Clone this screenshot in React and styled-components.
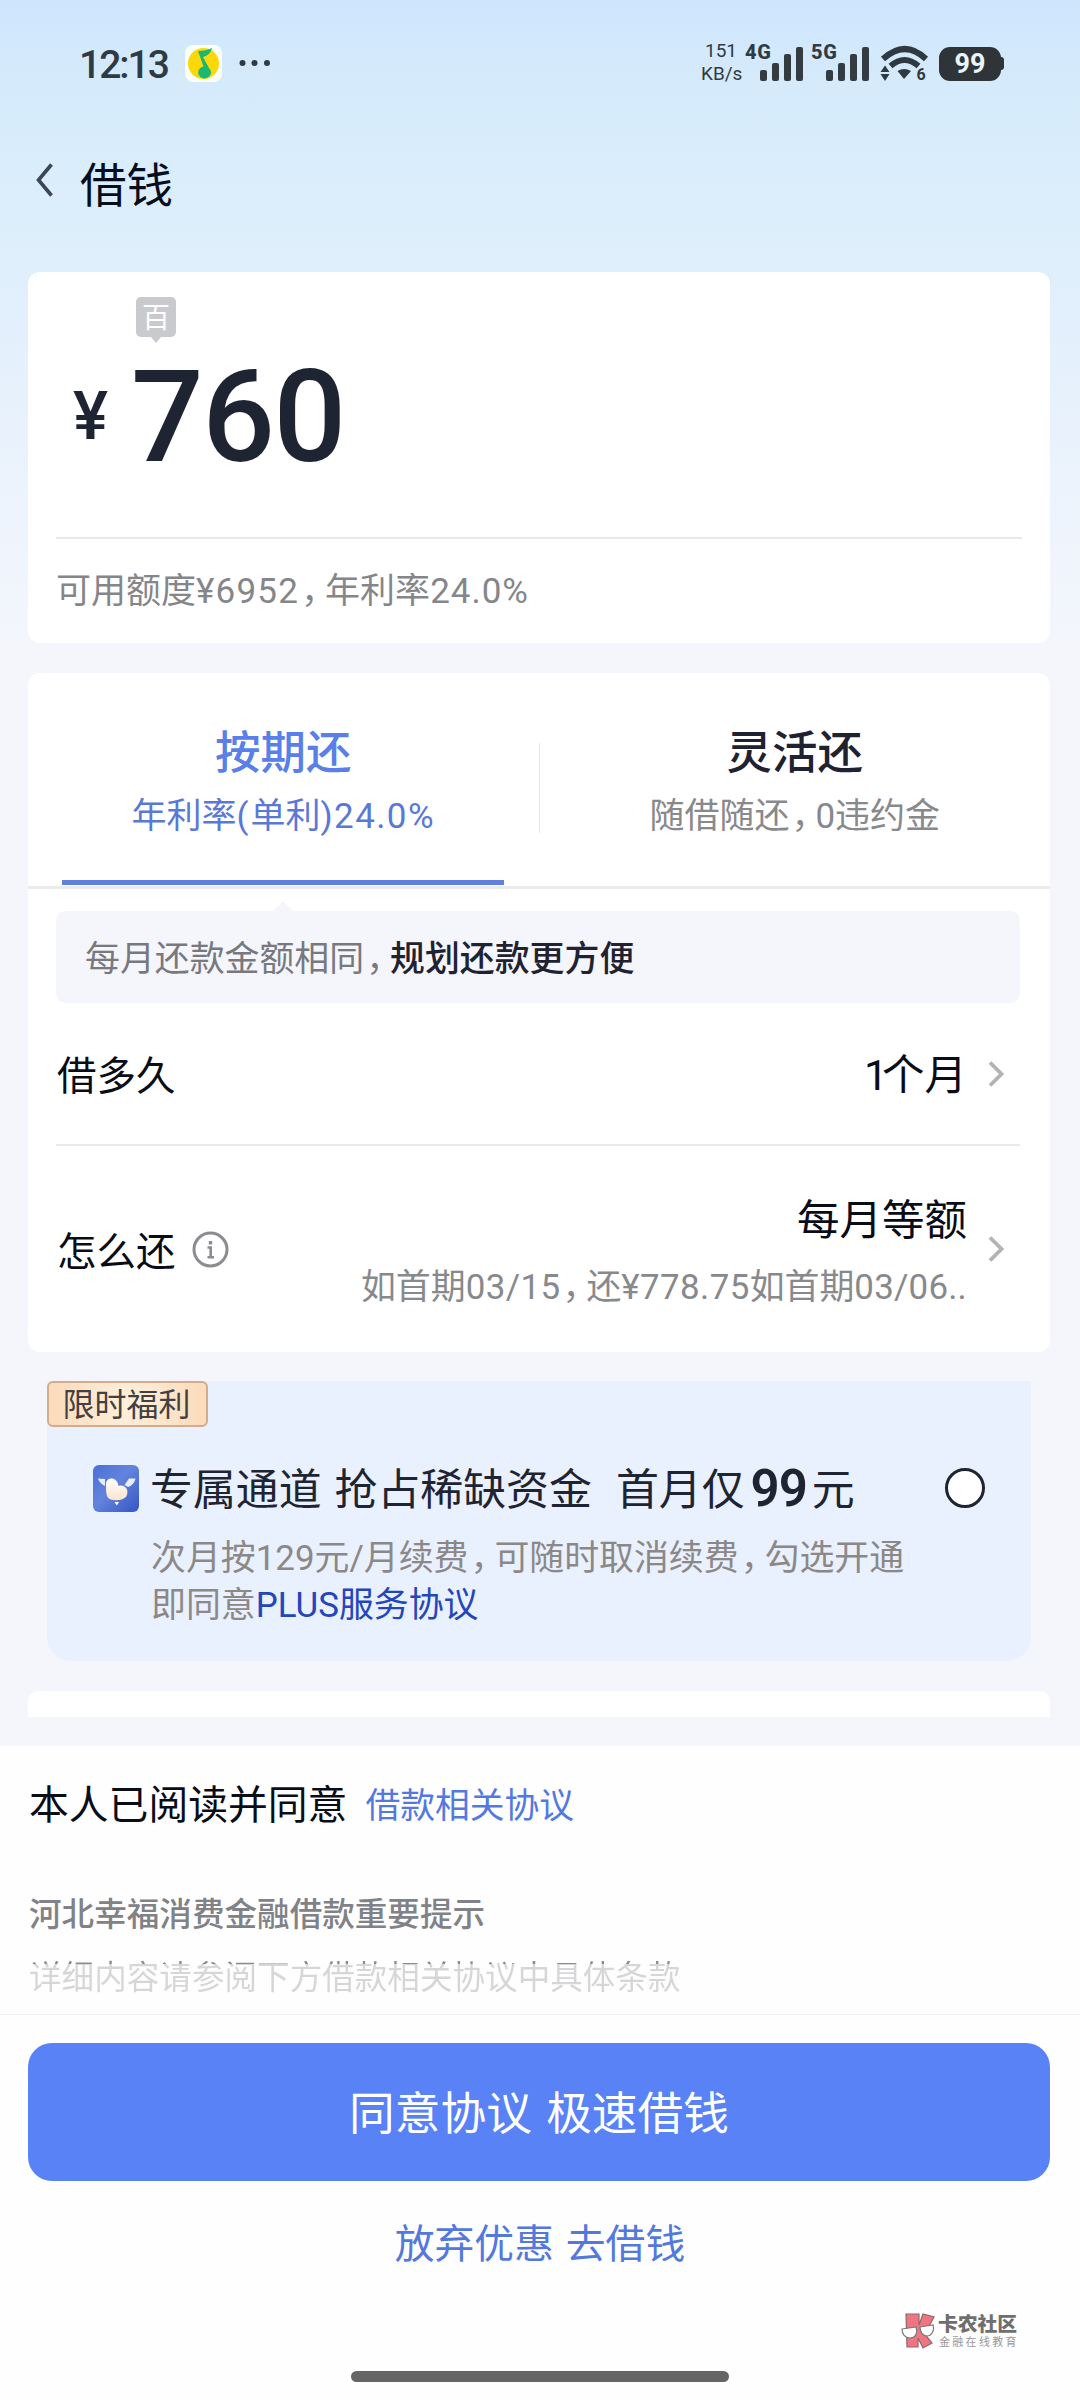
import React from "react";
import styled, { createGlobalStyle } from "styled-components";

const GlobalStyle = createGlobalStyle`
  * { box-sizing: border-box; }
  body {
    margin: 0;
    font-family: Roboto, "Noto Sans CJK SC", sans-serif;
    -webkit-font-smoothing: antialiased;
  }
`;

const Screen = styled.div`
  position: relative;
  display: flex;
  flex-direction: column;
  width: 1080px;
  height: 2400px;
  overflow: hidden;
  background: linear-gradient(180deg, #cfe5fd 0, #d5ebfb 85px, #dceefb 210px, #e1effc 290px, #f4f6fc 640px);
`;

/* Status bar */
const StatusBar = styled.header`
  display: flex;
  align-items: center;
  height: 126px;
  padding: 0 76px 0 79px;
  color: #2f3a45;
`;
const Clock = styled.span`
  width: 106px;
  font-size: 39px;
  line-height: 46px;
  font-weight: 500;
  letter-spacing: -2px;
  padding-top: 3px;
`;
const MusicIcon = styled.svg`
  width: 37px;
  height: 37px;
  flex: none;
`;
const MoreDots = styled.svg`
  width: 32px;
  height: 8px;
  margin-left: 17px;
`;
const StatusRight = styled.div`
  display: flex;
  align-items: flex-end;
  height: 40px;
  margin: 0 0 1px auto;
  padding-bottom: 2px;
`;
const NetSpeed = styled.div`
  width: 40px;
  margin-right: 4px;
  font-size: 19px;
  line-height: 23px;
  text-align: center;
  margin-bottom: -4px;
`;
const Signal = styled.div`
  display: flex;
  align-items: flex-end;
  width: ${(p) => p.$width}px;
  height: 38px;
`;
const NetLabel = styled.span`
  align-self: flex-start;
  width: 15px;
  font-size: 20px;
  line-height: 19px;
  font-weight: 800;
  letter-spacing: 0.8px;
  white-space: nowrap;
`;
const BarsIcon = styled.svg`
  width: 43px;
  height: 34px;
  flex: none;
`;
const WifiIcon = styled.svg`
  width: 48px;
  height: 36px;
  overflow: visible;
`;
const Battery = styled.div`
  display: flex;
  align-items: center;
  margin-left: 12px;
`;
const BatteryBody = styled.div`
  width: 62px;
  height: 34px;
  border-radius: 11px;
  background: #2e3438;
  color: #eaf5fd;
  font-size: 27px;
  line-height: 35px;
  font-weight: 700;
  text-align: center;
`;
const BatteryCap = styled.div`
  width: 3px;
  height: 13px;
  border-radius: 0 3px 3px 0;
  background: #2e3438;
`;

/* Title bar */
const TitleBar = styled.div`
  display: flex;
  align-items: center;
  height: 146px;
  padding: 0 0 30px 36px;
`;
const BackIcon = styled.svg`
  width: 18px;
  height: 34px;
  margin: -9px 26px 0 0;
`;
const PageTitle = styled.h1`
  margin: 0;
  padding-top: 3px;
  color: #080c1c;
  font-size: 46.5px;
  line-height: 60px;
  font-weight: 400;
`;

/* Cards */
const Card = styled.section`
  position: relative;
  flex: none;
  height: ${(p) => p.$height}px;
  margin: ${(p) => p.$top || 0}px 30px 0 28px;
  border-radius: ${(p) => p.$radius || "12px"};
  background: #fff;
`;

const UnitBadge = styled.div`
  position: absolute;
  top: 25px;
  left: 108px;
  width: 40px;
  height: 40px;
  border-radius: 5px;
  background: #c9cacd;
  color: #fff;
  font-size: 28px;
  line-height: 44px;
  text-align: center;
  &::after {
    content: "";
    position: absolute;
    left: 15px;
    bottom: -6px;
    border: 5px solid transparent;
    border-width: 6px 5px 0;
    border-top-color: #c9cacd;
  }
`;
const AmountRow = styled.div`
  display: flex;
  align-items: center;
  height: 267px;
  padding: 24px 0 0 17px;
  margin: 0 28px;
  border-bottom: 2px solid #e9e9eb;
  color: #1f2433;
  font-weight: 500;
`;
const Currency = styled.span`
  width: 58px;
  font-size: 66px;
  line-height: 68px;
`;
const Amount = styled.span`
  font-size: 128px;
  line-height: 128px;
  letter-spacing: -1.5px;
`;
const Quota = styled.p`
  margin: 0 28px;
  color: #858689;
  font-size: 35px;
  line-height: 106px;
  white-space: nowrap;
`;
const CommaMark = styled.span`
  margin-left: 2px;
  letter-spacing: -11px;
`;
const Num = styled.span`
  letter-spacing: ${(p) => p.$spacing}px;
`;

/* Repayment tabs */
const Tabs = styled.div`
  display: flex;
  height: 216px;
  border-bottom: 3px solid #ebebed;
`;
const Tab = styled.div`
  display: flex;
  flex: 1;
  flex-direction: column;
  align-items: center;
  padding-top: 51px;
  color: ${(p) => (p.$active ? "#5a7fe8" : "#1f2230")};
`;
const TabTitle = styled.div`
  font-size: 45.5px;
  line-height: 60px;
  font-weight: 500;
`;
const TabHint = styled.div`
  margin-top: 9px;
  color: ${(p) => (p.$active ? "#5a78d6" : "#88898c")};
  font-size: 35px;
  line-height: 48px;
  white-space: nowrap;
`;
const TabLine = styled.div`
  width: 442px;
  height: 5px;
  margin-top: 39px;
  background: #5f80dc;
`;
const TabDivider = styled.div`
  width: 1px;
  height: 90px;
  margin-top: 70px;
  background: #e6e6e8;
`;
const Notice = styled.div`
  position: relative;
  height: 92px;
  margin: 22px 30px 0 28px;
  padding-left: 29px;
  border-radius: 9px;
  background: #f5f6fc;
  color: #77797f;
  font-size: 34.9px;
  line-height: 97px;
  white-space: nowrap;
  &::before {
    content: "";
    position: absolute;
    top: -10px;
    left: 217px;
    border: 10px solid transparent;
    border-top-width: 0;
    border-bottom-color: #f5f6fc;
  }
  b {
    color: #1f2230;
    font-weight: 500;
  }
`;
const Row = styled.div`
  display: flex;
  align-items: center;
  height: ${(p) => p.$height}px;
  margin: 0 30px 0 28px;
  padding-right: 15px;
  border-bottom: ${(p) => (p.$divided ? "2px solid #e9e9eb" : "0")};
`;
const RowLabel = styled.span`
  color: #0a0c18;
  font-size: 39.5px;
  line-height: 60px;
  padding: 7px 0 0 1px;
`;
const InfoIcon = styled.svg`
  width: 37px;
  height: 37px;
  margin-left: 16px;
`;
const RowValue = styled.div`
  margin-left: auto;
  color: #0a0c18;
  font-size: 42.5px;
  line-height: 60px;
  text-align: right;
  padding-top: 5px;
`;
const RowNote = styled.div`
  margin-top: 13px;
  color: #88898c;
  font-size: 34.9px;
  line-height: 48px;
  white-space: nowrap;
`;
const Chevron = styled.svg`
  width: 17px;
  height: 28px;
  margin-left: 21px;
`;

/* Promotion */
const Promo = styled.section`
  flex: none;
  height: 280px;
  margin: 29px 49px 0 47px;
  border-radius: 0 0 24px 24px;
  background: #e9f0fe;
`;
const PromoTag = styled.div`
  width: 161px;
  height: 46px;
  border: 2px solid #d2ac8c;
  border-radius: 6px;
  background: radial-gradient(circle at 50% 50%, #fff1de 0, #fbdcbd 90%);
  color: #44403f;
  font-size: 32px;
  line-height: 45px;
  padding-right: 2px;
  text-align: center;
  white-space: nowrap;
`;
const PromoHead = styled.div`
  display: flex;
  align-items: center;
  height: 60px;
  margin-top: 31px;
  padding: 0 46px 0 46px;
`;
const PromoIcon = styled.svg`
  width: 46px;
  height: 47px;
  flex: none;
`;
const PromoTitle = styled.div`
  display: flex;
  align-items: center;
  margin-left: 11px;
  color: #1f2433;
  font-size: 42.9px;
  line-height: 60px;
  white-space: nowrap;
`;
const TitlePart = styled.span`
  margin-left: ${(p) => p.$gap || 0}px;
  padding-top: 4px;
`;
const PromoPrice = styled.strong`
  margin-left: 6px;
  padding-top: 2px;
  font-size: 51px;
  font-weight: 600;
  letter-spacing: -1px;
`;
const Radio = styled.span`
  width: 40px;
  height: 40px;
  margin: -1px 0 0 auto;
  border: 3px solid #1f2433;
  border-radius: 50%;
  background: #fff;
`;
const PromoText = styled.p`
  margin: 17px 0 0 104px;
  color: #8c8888;
  font-size: 34.9px;
  line-height: 47px;
  white-space: nowrap;
`;
const PlusLink = styled.a`
  color: #2446bb;
`;

/* Bottom panel */
const BottomPanel = styled.footer`
  position: relative;
  display: flex;
  flex: none;
  flex-direction: column;
  height: 654px;
  margin-top: 29px;
  background: #fefefe;
`;
const Consent = styled.div`
  display: flex;
  align-items: center;
  height: 118px;
  padding: 2px 0 0 29px;
  color: #0a0c18;
  font-size: 39.8px;
  line-height: 60px;
`;
const ConsentLink = styled.a`
  margin-left: 18px;
  color: #5379e0;
  font-size: 34.8px;
`;
const TipTitle = styled.div`
  margin: 28px 0 0 29px;
  color: #808287;
  font-size: 32.6px;
  line-height: 46px;
  font-weight: 500;
`;
const TipText = styled.div`
  align-self: flex-start;
  margin: 17px 0 13px 29px;
  background: linear-gradient(180deg, #8b8c8f 9px, #d6d6d8 9px);
  background-clip: text;
  color: transparent;
  font-size: 32.6px;
  line-height: 46px;
`;
const Submit = styled.button`
  height: 138px;
  margin: 28px 30px 0 28px;
  padding: 5px 0 0;
  border: 0;
  border-radius: 24px;
  background: #5882f6;
  color: #fff;
  font: 400 45.7px/60px Roboto, "Noto Sans CJK SC", sans-serif;
  word-spacing: 3px;
`;
const PanelRule = styled.div`
  height: 1px;
  background: #f2f2f4;
`;
const Decline = styled.a`
  margin-top: 34px;
  color: #5379dc;
  font-size: 39.8px;
  line-height: 60px;
  text-align: center;
  word-spacing: 2px;
`;
const HomeBar = styled.div`
  width: 378px;
  height: 11px;
  margin: auto auto 18px;
  border-radius: 6px;
  background: #656565;
`;
const Watermark = styled.div`
  position: absolute;
  left: 901px;
  top: 567px;
  display: flex;
`;
const WatermarkLogo = styled.svg`
  width: 34px;
  height: 36px;
`;
const WatermarkText = styled.div`
  margin-left: 3px;
  color: #6f6f70;
  font-size: 19.8px;
  line-height: 23px;
  font-weight: 900;
  white-space: nowrap;
`;
const WatermarkSub = styled.div`
  margin-left: 1px;
  color: #99999b;
  font-size: 11px;
  line-height: 13px;
  font-weight: 400;
  letter-spacing: 2.3px;
`;

const Comma = () => <CommaMark>，</CommaMark>;

const SignalBars = () => (
  <BarsIcon viewBox="0 0 43 34" fill="#343c42">
    <rect x="0" y="23" width="7" height="11" rx="2" />
    <rect x="12" y="16" width="7" height="18" rx="2" />
    <rect x="24" y="7" width="7" height="27" rx="2" />
    <rect x="36" y="0" width="7" height="34" rx="2" />
  </BarsIcon>
);

const RightArrow = () => (
  <Chevron viewBox="0 0 17 28" fill="none" stroke="#b3b3b5" strokeWidth="3.8">
    <path d="M2 2.5 L13.5 14 L2 25.5" />
  </Chevron>
);

export default function App() {
  return (
    <Screen>
      <GlobalStyle />
      <StatusBar>
        <Clock>12:13</Clock>
        <MusicIcon viewBox="0 0 37 37">
          <rect width="37" height="37" rx="8" fill="#fbfff8" />
          <circle cx="18.5" cy="18.5" r="15.5" fill="#fcd808" />
          <path d="M13 6 C18 6 23 5 27 3 C26 8 22 11 18 12 L24 23 A6.5 6 0 1 1 18.5 21.5 Z" fill="#1bb871" />
        </MusicIcon>
        <MoreDots viewBox="0 0 32 8" fill="#2f3a45">
          <circle cx="3.5" cy="4" r="3" />
          <circle cx="15.5" cy="4" r="3" />
          <circle cx="28" cy="4" r="3" />
        </MoreDots>
        <StatusRight>
          <NetSpeed>151<br />KB/s</NetSpeed>
          <Signal $width={66}>
            <NetLabel>4G</NetLabel>
            <SignalBars />
          </Signal>
          <Signal $width={68}>
            <NetLabel>5G</NetLabel>
            <SignalBars />
          </Signal>
          <WifiIcon viewBox="0 0 48 36" fill="none" stroke="#2e3941">
            <path d="M4 14 Q26 -6 47 14" strokeWidth="6" />
            <path d="M11.5 21 Q25.5 9 39.5 21" strokeWidth="6" />
            <path d="M18.5 26 Q25 22 32 26 L25 34 Z" fill="#2e3941" stroke="none" />
            <path d="M6 20.5 L10.5 27 H1.5 Z M6 36 L10.5 29 H1.5 Z" fill="#2e3941" stroke="none" />
            <text x="37.5" y="35" fontSize="16" fontWeight="700" fill="#2e3941" stroke="none">6</text>
          </WifiIcon>
          <Battery>
            <BatteryBody>99</BatteryBody>
            <BatteryCap />
          </Battery>
        </StatusRight>
      </StatusBar>

      <TitleBar>
        <BackIcon viewBox="0 0 18 34" fill="none" stroke="#3a4652" strokeWidth="3.6">
          <path d="M15.5 1.5 L2.5 17 L15.5 32.5" />
        </BackIcon>
        <PageTitle>借钱</PageTitle>
      </TitleBar>

      <Card $height={371}>
        <UnitBadge>百</UnitBadge>
        <AmountRow>
          <Currency>¥</Currency>
          <Amount>760</Amount>
        </AmountRow>
        <Quota>
          可用额度<Num $spacing={1.2}>¥6952</Num><Comma />年利率<Num $spacing={1}>24.0%</Num>
        </Quota>
      </Card>

      <Card $height={679} $top={30}>
        <Tabs>
          <Tab $active>
            <TabTitle>按期还</TabTitle>
            <TabHint $active>
              年利率<Num $spacing={2}>(</Num>单利<Num $spacing={1.4}>)24.0%</Num>
            </TabHint>
            <TabLine />
          </Tab>
          <TabDivider />
          <Tab>
            <TabTitle>灵活还</TabTitle>
            <TabHint>随借随还<Comma />0违约金</TabHint>
          </Tab>
        </Tabs>
        <Notice>每月还款金额相同<Comma /><b>规划还款更方便</b></Notice>
        <Row $height={143} $divided>
          <RowLabel>借多久</RowLabel>
          <RowValue><Num $spacing={-6}>1</Num>个月</RowValue>
          <RightArrow />
        </Row>
        <Row $height={206}>
          <RowLabel>怎么还</RowLabel>
          <InfoIcon viewBox="0 0 37 37" fill="none" stroke="#8b8c90">
            <circle cx="18.5" cy="18.5" r="16.5" strokeWidth="3" />
            <path d="M18.5 10 V13.5" strokeWidth="3.4" />
            <path d="M15.5 16.5 H18.7 V26 M15.5 26.2 H22" strokeWidth="2.6" />
          </InfoIcon>
          <RowValue>
            每月等额
            <RowNote>
              如首期<Num $spacing={0.4}>03/15</Num><Comma />还<Num $spacing={0.4}>¥778.75</Num>如首期<Num $spacing={0.2}>03/06..</Num>
            </RowNote>
          </RowValue>
          <RightArrow />
        </Row>
      </Card>

      <Promo>
        <PromoTag>限时福利</PromoTag>
        <PromoHead>
          <PromoIcon viewBox="0 0 46 47">
            <defs>
              <linearGradient id="plusBg" x1="0" y1="0" x2="1" y2="1">
                <stop offset="0" stopColor="#4a6fd6" />
                <stop offset="0.45" stopColor="#6384dc" />
                <stop offset="1" stopColor="#3556c4" />
              </linearGradient>
              <linearGradient id="plusHeart" x1="0" y1="0" x2="0" y2="1">
                <stop offset="0" stopColor="#fff" />
                <stop offset="1" stopColor="#fbe3cc" />
              </linearGradient>
            </defs>
            <rect width="46" height="47" rx="6" fill="url(#plusBg)" />
            <path d="M5 13.5 L12 14 V21 C9 19.5 6 17 5 13.5 Z M42.5 13.5 L36 13.5 L31.5 20 L35 22 C38.5 21 41.5 18 42.5 13.5 Z" fill="#e8ecfb" />
            <path d="M13 19 C13 12 24 11 25.5 21 C32 19 36.5 25 33.5 31 C31 36 17 37 14.5 32 C13 29 13 24 13 19 Z" fill="url(#plusHeart)" />
            <path d="M21.5 37 H26 L23.8 40.5 Z" fill="#fff" />
          </PromoIcon>
          <PromoTitle>
            <TitlePart>专属通道</TitlePart>
            <TitlePart $gap={13}>抢占稀缺资金</TitlePart>
            <TitlePart $gap={24}>首月仅</TitlePart>
            <PromoPrice>99</PromoPrice>
            <TitlePart $gap={5}>元</TitlePart>
          </PromoTitle>
          <Radio />
        </PromoHead>
        <PromoText>
          次月按129元/月续费<Comma />可随时取消续费<Comma />勾选开通
          <br />
          即同意<PlusLink>PLUS服务协议</PlusLink>
        </PromoText>
      </Promo>

      <Card $height={26} $top={30} $radius="10px 10px 0 0" />

      <BottomPanel>
        <Consent>
          本人已阅读并同意
          <ConsentLink>借款相关协议</ConsentLink>
        </Consent>
        <TipTitle>河北幸福消费金融借款重要提示</TipTitle>
        <TipText>详细内容请参阅下方借款相关协议中具体条款</TipText>
        <PanelRule />
        <Submit>同意协议 极速借钱</Submit>
        <Decline>放弃优惠 去借钱</Decline>
        <HomeBar />
        <Watermark>
          <WatermarkLogo viewBox="0 0 34 36">
            <path d="M5 1 H18 V12 L22 1 L33 4 L27 15 L22 19 L31 30 L22 35 L17 25 V34 H6 Z" fill="#ef7583" stroke="#8d6a6d" strokeWidth="1.2" />
            <path d="M1 16 L15 14 C17 21 14 25 9 25 C4 25 1 21 1 16 Z M19 14 L32 12 C34 18 30 23 26 23 C22 23 19 19 19 14 Z" fill="#fff" stroke="#7b7b7b" strokeWidth="1.2" />
          </WatermarkLogo>
          <WatermarkText>
            卡农社区
            <WatermarkSub>金融在线教育</WatermarkSub>
          </WatermarkText>
        </Watermark>
      </BottomPanel>
    </Screen>
  );
}
